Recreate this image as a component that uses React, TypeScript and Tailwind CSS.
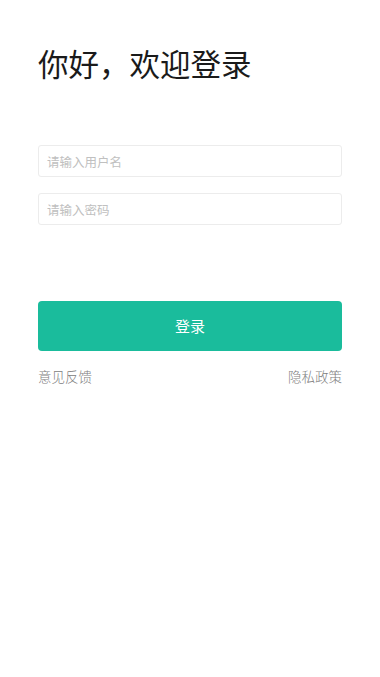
export default function App() {
  return (
    <div
      className="min-h-[677px] w-full bg-white px-[38px]"
      style={{ fontFamily: '"Noto Sans CJK SC", "Noto Sans", sans-serif' }}
    >
      <h1 className="pt-[41px] text-[30.5px] font-normal leading-[44px] text-[#1a1a1a]">
        你好，欢迎登录
      </h1>

      <div className="mt-[60px] flex flex-col gap-4">
        <input
          className="h-8 w-full rounded-[3px] border border-[#ececec] px-2 text-[12.5px] text-[#333] outline-none placeholder:text-[#c0c0c0]"
          placeholder="请输入用户名"
        />
        <input
          type="password"
          className="h-8 w-full rounded-[3px] border border-[#ececec] px-2 text-[12.5px] text-[#333] outline-none placeholder:text-[#c0c0c0]"
          placeholder="请输入密码"
        />
      </div>

      <button className="mt-[76px] h-[50px] w-full rounded-[4px] bg-[#1abc9c] text-[15px] text-white">
        登录
      </button>

      <div className="mt-[15px] flex items-center justify-between text-[13.5px] font-light text-[#808080]">
        <span>意见反馈</span>
        <span>隐私政策</span>
      </div>
    </div>
  );
}
